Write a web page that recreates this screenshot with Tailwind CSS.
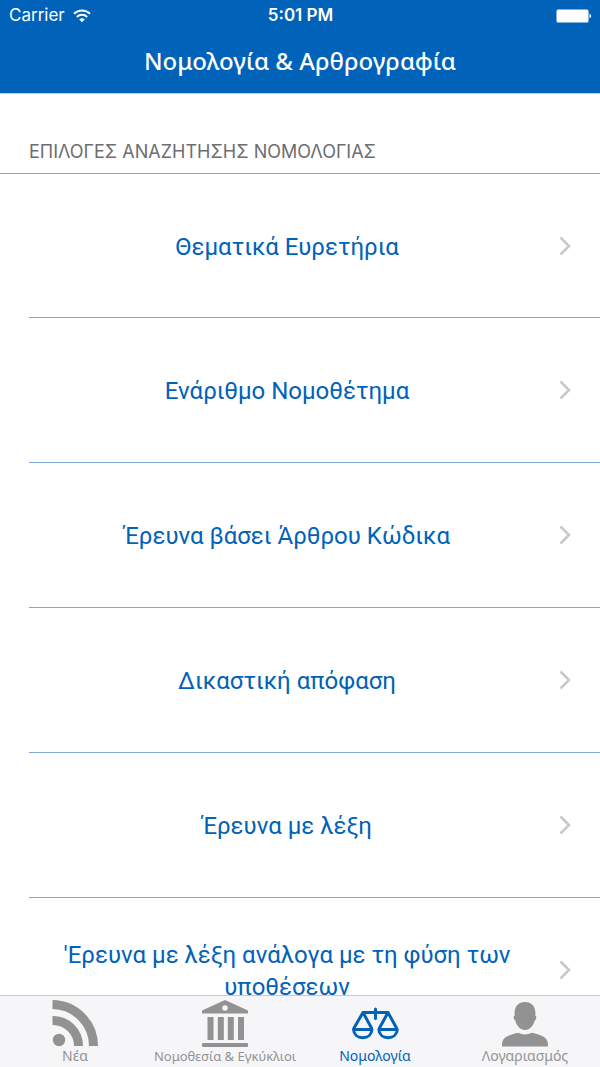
<!DOCTYPE html>
<html lang="el">

<head>
  <meta charset="UTF-8">
  <meta name="viewport" content="width=device-width, initial-scale=1.0">
  <title>Νομολογία &amp; Αρθρογραφία</title>
  <script src="https://cdn.jsdelivr.net/npm/@tailwindcss/browser@4"></script>
</head>

<body class="flex h-screen flex-col overflow-hidden bg-white font-['Inter',sans-serif]">
  <!-- Status bar and title -->
  <header class="shrink-0 border-b border-[#c8d3de] bg-[#0062b8] text-white">
    <div class="grid h-[31px] grid-cols-3 items-center pl-[9px] pr-2 text-[17px]">
      <div class="flex items-center gap-2">
        <span>Carrier</span>
        <svg class="h-[14px] w-[18px]" viewBox="0 0 18 14" fill="none" stroke="currentColor" stroke-width="2" aria-label="Wi-Fi">
          <path d="M1 4.800a11.500 11.500 0 0 1 16 0M3.800 7.900a7.600 7.600 0 0 1 10.400 0" />
          <path d="M9 13.300 6.200 10.400a4.200 4.200 0 0 1 5.600 0z" fill="currentColor" stroke="none" />
        </svg>
      </div>
      <span class="text-center font-semibold">5:01 PM</span>
      <svg class="h-[14px] w-9 justify-self-end" viewBox="0 0 36 14" fill="currentColor" aria-label="Battery">
        <rect x="0.500" y="0.500" width="32" height="13" rx="1.500" />
        <path d="M33.500 4.500q3.400 2.500 0 5z" />
      </svg>
    </div>
    <h1 class="flex h-[62px] items-center justify-center pb-0.5 font-['Noto_Sans',sans-serif] text-2xl font-medium">Νομολογία &amp; Αρθρογραφία</h1>
  </header>

  <!-- Search options -->
  <main class="min-h-0 flex-1 overflow-hidden">
    <h2 class="flex h-[79px] items-end pb-[7px] pl-[29px] text-lg text-[#6d6d72]">ΕΠΙΛΟΓΕΣ ΑΝΑΖΗΤΗΣΗΣ ΝΟΜΟΛΟΓΙΑΣ</h2>
    <ul class="border-t border-[#78abd8] font-['Roboto',sans-serif] text-2xl leading-8 text-[#0062b8]">
      <li class="pl-[29px]">
        <a href="#" class="flex h-[144px] items-center gap-[14px] border-b border-[#78abd8] pr-[29px]">
          <span class="flex-1 pt-0.5 text-center">Θεματικά Ευρετήρια</span>
          <svg class="h-5 w-3 text-[#c7c7cc]" viewBox="0 0 12 20" fill="none" stroke="currentColor" stroke-width="2.500"><path d="m1.500 1.500 8.500 8.500-8.500 8.500" /></svg>
        </a>
      </li>
      <li class="pl-[29px]">
        <a href="#" class="flex h-[145px] items-center gap-[14px] border-b border-[#78abd8] pr-[29px]">
          <span class="flex-1 pt-0.5 text-center">Ενάριθμο Νομοθέτημα</span>
          <svg class="h-5 w-3 text-[#c7c7cc]" viewBox="0 0 12 20" fill="none" stroke="currentColor" stroke-width="2.500"><path d="m1.500 1.500 8.500 8.500-8.500 8.500" /></svg>
        </a>
      </li>
      <li class="pl-[29px]">
        <a href="#" class="flex h-[145px] items-center gap-[14px] border-b border-[#78abd8] pr-[29px]">
          <span class="flex-1 pt-0.5 text-center">Έρευνα βάσει Άρθρου Κώδικα</span>
          <svg class="h-5 w-3 text-[#c7c7cc]" viewBox="0 0 12 20" fill="none" stroke="currentColor" stroke-width="2.500"><path d="m1.500 1.500 8.500 8.500-8.500 8.500" /></svg>
        </a>
      </li>
      <li class="pl-[29px]">
        <a href="#" class="flex h-[145px] items-center gap-[14px] border-b border-[#78abd8] pr-[29px]">
          <span class="flex-1 pt-0.5 text-center">Δικαστική απόφαση</span>
          <svg class="h-5 w-3 text-[#c7c7cc]" viewBox="0 0 12 20" fill="none" stroke="currentColor" stroke-width="2.500"><path d="m1.500 1.500 8.500 8.500-8.500 8.500" /></svg>
        </a>
      </li>
      <li class="pl-[29px]">
        <a href="#" class="flex h-[145px] items-center gap-[14px] border-b border-[#78abd8] pr-[29px]">
          <span class="flex-1 pt-0.5 text-center">Έρευνα με λέξη</span>
          <svg class="h-5 w-3 text-[#c7c7cc]" viewBox="0 0 12 20" fill="none" stroke="currentColor" stroke-width="2.500"><path d="m1.500 1.500 8.500 8.500-8.500 8.500" /></svg>
        </a>
      </li>
      <li class="pl-[29px]">
        <a href="#" class="flex h-[145px] items-center gap-[14px] border-b border-[#78abd8] pr-[29px]">
          <span class="flex-1 pt-0.5 text-center">'Ερευνα με λέξη ανάλογα με τη φύση των υποθέσεων</span>
          <svg class="h-5 w-3 text-[#c7c7cc]" viewBox="0 0 12 20" fill="none" stroke="currentColor" stroke-width="2.500"><path d="m1.500 1.500 8.500 8.500-8.500 8.500" /></svg>
        </a>
      </li>
    </ul>
  </main>

  <!-- Tab bar -->
  <nav class="grid h-[72px] shrink-0 grid-cols-4 border-t border-[#c9c9cc] bg-[#f6f6f8] pt-1 font-['Noto_Sans',sans-serif] text-sm leading-4 text-[#929292]">
    <a href="#" class="flex flex-col items-center whitespace-nowrap">
      <svg class="h-12 w-12" viewBox="0 0 48 48" fill="none" stroke="currentColor" stroke-width="9">
        <circle cx="8" cy="40" r="6.200" fill="currentColor" stroke="none" />
        <path d="M1.500 20.500a25.500 25.500 0 0 1 26 25.500M1.500 4.500a41.500 41.500 0 0 1 41 41.500" />
      </svg>
      Νέα
    </a>
    <a href="#" class="flex flex-col items-center whitespace-nowrap text-[13px]">
      <svg class="h-12 w-12" viewBox="0 0 48 48" fill="currentColor">
        <path fill-rule="evenodd" d="M24 0 47 10.500V13.500H1V10.500zM24 5.300a2.700 2.700 0 1 0 0 5.400 2.700 2.700 0 0 0 0-5.400z" />
        <path d="M6.500 17h6v23h-6zM16.800 17h6v23h-6zM26.800 17h6v23h-6zM37 17h6v23h-6z" />
        <rect x="1" y="43" width="46" height="4" rx="1" />
      </svg>
      Νομοθεσία &amp; Εγκύκλιοι
    </a>
    <a href="#" aria-current="page" class="flex flex-col items-center whitespace-nowrap text-[#0062b8]">
      <svg class="h-12 w-12" viewBox="0 0 48 48" fill="none" stroke="currentColor" stroke-width="3" stroke-linecap="round" stroke-linejoin="round">
        <path d="M24.500 9v9.500M12 12.500h25M12 12.500 3 28M12 12.500 20.500 28M37 12.500 28.500 28M37 12.500 45.500 28" />
        <path d="M2.500 29.500h18.500c-.3 5-4 8.200-9.200 8.200s-9-3.200-9.300-8.200zM27.800 29.500h18.500c-.3 5-4 8.200-9.200 8.200s-9-3.200-9.300-8.200z" />
      </svg>
      Νομολογία
    </a>
    <a href="#" class="flex flex-col items-center whitespace-nowrap">
      <svg class="h-12 w-12" viewBox="0 0 48 48" fill="currentColor">
        <path d="M24 2c6.500 0 10.500 4.500 10.400 11v3c1 0 1.100 1 .8 2.300-.2 1.200-.7 1.900-1.400 2C32.500 26 28.500 30 24 30s-8.500-4-9.800-9.700c-.7-.1-1.200-.8-1.400-2-.3-1.300-.2-2.300.8-2.300v-3C13.500 6.500 17.500 2 24 2z" />
        <path d="M17.500 32.800c4 2.300 9 2.300 13 0 7 1.500 14.500 3.500 16 8.700.4 1.500.5 3 .5 5H1c0-2 .1-3.500.5-5 1.500-5.200 9-7.200 16-8.700z" />
      </svg>
      Λογαριασμός
    </a>
  </nav>
</body>

</html>
